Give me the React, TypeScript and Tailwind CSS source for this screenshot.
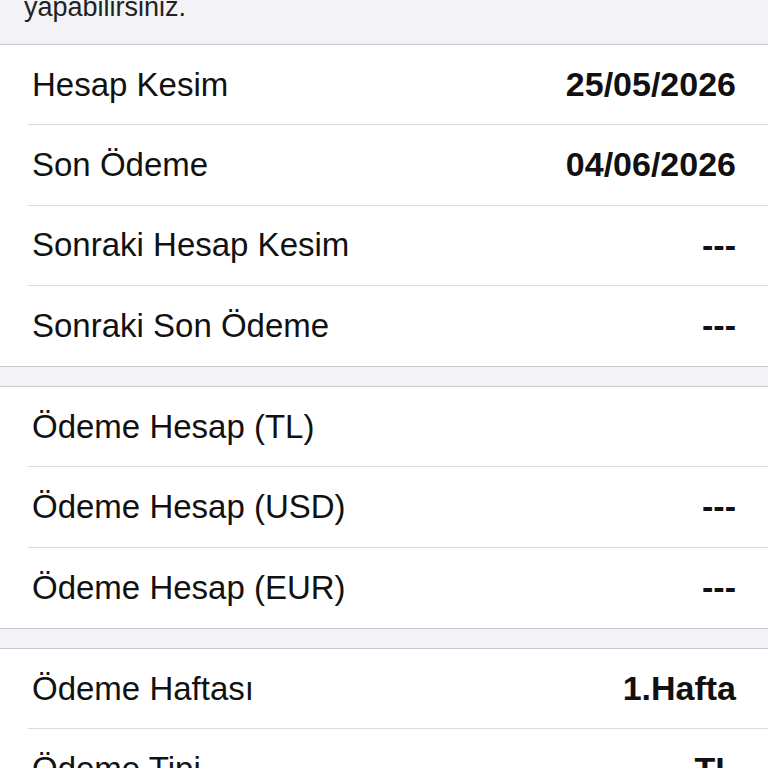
type Row = { label: string; value?: string };

const sections: Row[][] = [
  [
    { label: "Hesap Kesim", value: "25/05/2026" },
    { label: "Son Ödeme", value: "04/06/2026" },
    { label: "Sonraki Hesap Kesim", value: "---" },
    { label: "Sonraki Son Ödeme", value: "---" },
  ],
  [
    { label: "Ödeme Hesap (TL)" },
    { label: "Ödeme Hesap (USD)", value: "---" },
    { label: "Ödeme Hesap (EUR)", value: "---" },
  ],
  [
    { label: "Ödeme Haftası", value: "1.Hafta" },
    { label: "Ödeme Tipi", value: "TL" },
  ],
];

function Section({ rows }: { rows: Row[] }) {
  return (
    <div className="bg-white border-y border-[#c8c8cc]">
      {rows.map((r, i) => (
        <div key={r.label} className="pl-[28px]">
          <div
            className={
              "h-[80.25px] flex items-center justify-between pl-[4px] pr-[32px] " +
              (i < rows.length - 1 ? "border-b border-[#dcdce0]" : "")
            }
          >
            <span className="text-[33px] text-[#111]">{r.label}</span>
            {r.value && <span className="text-[34px] font-semibold text-[#111]">{r.value}</span>}
          </div>
        </div>
      ))}
    </div>
  );
}

export default function App() {
  return (
    <div
      className="w-[768px] h-[768px] overflow-hidden bg-[#f2f2f7]"
      style={{ fontFamily: '"Liberation Sans", Arial, sans-serif' }}
    >
      <div className="h-[44px] overflow-hidden pl-[24px]">
        <p className="-mt-[9px] text-[27px] leading-[32px] text-[#222]">yapabilirsiniz.</p>
      </div>
      <div className="flex flex-col gap-[19px]">
        {sections.map((s, i) => (
          <Section key={i} rows={s} />
        ))}
      </div>
    </div>
  );
}
